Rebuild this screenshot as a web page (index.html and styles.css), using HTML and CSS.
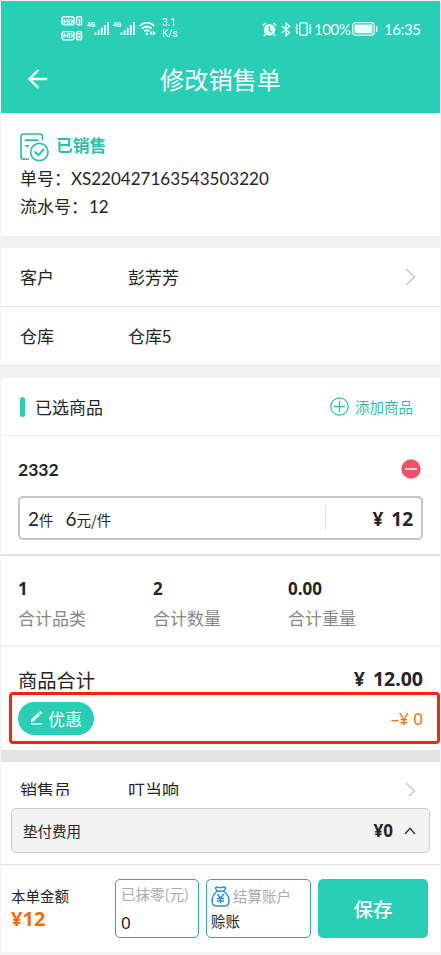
FILE: index.html
```html
<!DOCTYPE html>
<html lang="zh-CN">
<head>
<meta charset="utf-8">
<title>修改销售单</title>
<link rel="stylesheet" href="styles.css">
</head>
<body>
<div class="phone">
  <header class="header">
    <div class="status">
      <div class="status-left">
        <svg class="hd" width="22" height="25" viewBox="0 0 22 25">
          <g fill="none" stroke="#fff" stroke-width="1.4"><rect x="1" y=".7" width="12" height="8.2" rx="2"/><rect x="15.6" y=".7" width="5" height="8.2" rx="1.4"/><rect x="1" y="15.6" width="12" height="8.2" rx="2"/><rect x="15.6" y="15.6" width="5" height="8.2" rx="1.4"/></g>
          <g fill="#fff" font-family="Roboto" font-weight="700" font-size="7.4"><text x="1.9" y="7.5">HD</text><text x="16.1" y="7.5">1</text><text x="1.9" y="22.4">HD</text><text x="16" y="22.4">2</text></g>
        </svg>
        <svg class="sig" width="22" height="15" viewBox="0 0 22 15">
          <text x="0" y="6" fill="#fff" font-family="Roboto" font-weight="700" font-size="7" textLength="8" lengthAdjust="spacingAndGlyphs">4G</text>
          <path d="M8.5 14V11.6M11.6 14V9.2M14.7 14V6.8M17.8 14V4M20.9 14V1" stroke="#fff" stroke-width="1.8"/>
        </svg>
        <svg class="sig2" width="22" height="15" viewBox="0 0 22 15">
          <text x="0" y="6" fill="#fff" font-family="Roboto" font-weight="700" font-size="7" textLength="8" lengthAdjust="spacingAndGlyphs">4G</text>
          <path d="M8.5 14V11.6M11.6 14V9.2M14.7 14V6.8M17.8 14V4M20.9 14V1" stroke="#fff" stroke-width="1.8"/>
        </svg>
        <svg class="wifi" width="17" height="15" viewBox="0 0 17 15">
          <path d="M.8 4.8Q8 -1.6 15.2 4.8M3.1 7.7Q8 3.4 12.9 7.7M5.3 10.4Q8 8.1 10.7 10.4" fill="none" stroke="#fff" stroke-width="1.7"/>
          <circle cx="8" cy="12.9" r="1.3" fill="#fff"/><path d="M13.3 9.6v5l-2.5-2.3zM14.2 9.6v5l2.5-2.3z" fill="#fff"/>
        </svg>
        <div class="speed"><span>3.1</span><span>K/s</span></div>
      </div>
      <div class="status-right">
        <svg width="15" height="15" viewBox="0 0 15 15">
          <circle cx="7.5" cy="7.8" r="5.8" fill="#e9fffb"/><path d="M.8 3.6 3.4 1M14.2 3.6 11.6 1M3.5 12.2 1.8 14M11.5 12.2l1.7 1.8" stroke="#e9fffb" stroke-width="1.5"/><path d="M7.4 4.2v4l2.2 2.3" fill="none" stroke="#28cfb5" stroke-width="1.4"/>
        </svg>
        <svg class="bt" width="10" height="15" viewBox="0 0 10 15"><path d="M.8 4 8.6 10.6 5 13.8V1.2l3.6 3L.8 11" fill="none" stroke="#e9fffb" stroke-width="1.3"/></svg>
        <svg class="vib" width="17" height="14" viewBox="0 0 17 14"><rect x="4.8" y=".8" width="7.4" height="12.4" rx="1.2" fill="none" stroke="#e9fffb" stroke-width="1.4"/><path d="M1 2.2l1.7 1.6L1 5.4 2.7 7 1 8.6l1.7 1.6L1 11.8M16 2.2l-1.7 1.6L16 5.4 14.3 7 16 8.6l-1.7 1.6 1.7 1.6" fill="none" stroke="#e9fffb" stroke-width="1.1"/></svg>
        <span class="pct">100%</span>
        <svg class="bat" width="26" height="14" viewBox="0 0 26 14"><rect x=".7" y=".7" width="21.6" height="12.4" rx="3" fill="none" stroke="#e9fffb" stroke-width="1.2"/><rect x="2.5" y="2.6" width="18" height="8.6" rx="1" fill="#e9fffb"/><path d="M24.7 4v6" stroke="#e9fffb" stroke-width="1.4"/></svg>
        <span class="clock">16:35</span>
      </div>
    </div>
    <div class="nav">
      <svg class="back" width="20" height="20" viewBox="0 0 20 20"><path d="M19.2 10H1.6M10.4 1 1.4 10l9 9" fill="none" stroke="#fff" stroke-width="2.4"/></svg>
      <h1>修改销售单</h1>
    </div>
  </header>

  <section class="order">
    <div class="state">
      <svg width="29" height="29" viewBox="0 0 29 29" fill="none" stroke="#2bc2aa" stroke-width="1.7" stroke-linecap="round">
        <path d="M22.4 6.2V3.4Q22.4 1 20 1H3.4Q1 1 1 3.4v20.4q0 2.4 2.4 2.4h4.8M5.6 7.2h12.2M5.6 12.8h3"/><circle cx="19.3" cy="19" r="8.7"/><path d="m15 19 3.4 3.1 5.2-5.6" stroke-width="2"/>
      </svg>
      <span>已销售</span>
    </div>
    <p class="no">单号：<b>XS220427163543503220</b></p>
    <p class="serial">流水号：<b>12</b></p>
  </section>

  <div class="gap"></div>
  <div class="row customer"><span class="label">客户</span><span>彭芳芳</span>
    <svg class="chev" width="11" height="18" viewBox="0 0 11 18"><path d="m1 1 8.6 8L1 17" fill="none" stroke="#c4c4c4" stroke-width="1.3"/></svg></div>
  <div class="row store"><span class="label">仓库</span><span>仓库5</span></div>
  <div class="gap gap-b"></div>

  <div class="picked">
    <i class="bar"></i><span class="picked-title">已选商品</span>
    <svg width="19" height="19" viewBox="0 0 19 19"><path d="M9.5 4v11M4 9.5h11" stroke="#2fbfa9" stroke-width="1.3"/><circle cx="9.5" cy="9.5" r="8.7" fill="none" stroke="#2fbfa9" stroke-width="1.2"/></svg>
    <span class="add">添加商品</span>
  </div>

  <section class="product">
    <div class="product-head"><span>2332</span>
      <svg width="20" height="20" viewBox="0 0 20 20"><circle cx="10" cy="10" r="9.7" fill="#ee5264"/><path d="M4 10h12" stroke="#fff" stroke-width="1.4"/></svg></div>
    <div class="product-box">
      <span class="qty"><b>2</b>件</span><span class="price"><b>6</b>元/件</span>
      <span class="amount">¥ 12</span>
    </div>
  </section>

  <section class="summary">
    <div><b>1</b><span>合计品类</span></div>
    <div><b>2</b><span>合计数量</span></div>
    <div><b>0.00</b><span>合计重量</span></div>
  </section>

  <section class="total">
    <div class="total-row"><span>商品合计</span><b>¥ 12.00</b></div>
    <div class="discount">
      <span class="pill"><svg width="13" height="14" viewBox="0 0 13 14"><path d="M1 12.8h11" stroke="#fff" stroke-width="1.5"/><path d="m.8 11.2.8-3.1 6.3-6 2.1 2-6.3 6.1zM8.7 1.4 9.8.4q.5-.4 1 .1l1.1 1q.5.5 0 1l-1.1 1z" fill="#fff"/></svg>优惠</span>
      <span class="minus">–¥ 0</span>
    </div>
  </section>

  <div class="gap gap-dark"></div>
  <div class="row seller"><span class="label">销售员</span><span>叮当响</span>
    <svg class="chev" width="11" height="18" viewBox="0 0 11 18"><path d="m1 1 8.6 8L1 17" fill="none" stroke="#c4c4c4" stroke-width="1.3"/></svg></div>

  <div class="fee"><span>垫付费用</span><b>¥0</b>
    <svg width="12" height="8" viewBox="0 0 12 8"><path d="M1 7 6 1.4 11 7" fill="none" stroke="#333" stroke-width="1.4"/></svg></div>

  <footer class="footer">
    <div class="sum"><span>本单金额</span><b>¥12</b></div>
    <div class="field round"><span>已抹零(元)</span><b>0</b></div>
    <div class="field account">
      <div class="acc-top"><svg width="19" height="21" viewBox="0 0 19 21" fill="none" stroke="#258fd2" stroke-width="1.4" stroke-linejoin="round"><path d="M6.1 5.2 4.3 2Q6 .5 7.8 1.4q1.6.8 3.2 0Q13 .5 14.7 2l-1.8 3.2M6.1 5.2h6.8M6.1 5.2Q1 9.4 1 14.5 1 20 5.4 20h8.2Q18 20 18 14.5q0-5.1-5.1-9.3"/><path d="m6.3 8 3.2 4 3.2-4M9.5 12v5.5M6 12.4h7M6 15h7"/></svg><span>结算账户</span></div>
      <em>赊账</em>
    </div>
    <div class="save">保存</div>
  </footer>
</div>
</body>
</html>
```
FILE: styles.css
```css
* { box-sizing: border-box; }
body {
  margin: 0;
  padding: 1px 1px 0;
  height: 955px;
  overflow: hidden;
  background: #f3f3f3;
  color: #252525;
  font-family: "Noto Sans CJK SC", sans-serif;
  font-size: 17px;
}
p, h1 { margin: 0; font-weight: 400; }
svg { display: block; flex: none; }
.phone { width: 439px; height: 951px; background: #fff; overflow: hidden; }

.header { height: 112px; background: #28cfb5; color: #fff; }
.status { display: flex; justify-content: space-between; height: 54px; padding: 0 20px 0 60px; }
.status-left, .status-right { display: flex; align-items: center; }
.sig { margin-left: 4px; }
.sig2 { margin-left: 4px; }
.wifi { margin-left: 4px; }
.speed { display: flex; flex-direction: column; margin-left: 6px; font: 10px/11px Roboto, sans-serif; }
.status-right { color: #e9fffb; font-family: Lato, sans-serif; font-size: 15px; padding-top: 2px; }
.status-right svg:first-child { margin-left: -1px; }
.bt { margin-left: 4px; }
.vib { margin-left: 4px; }
.pct { width: 36px; margin-left: 2px; white-space: nowrap; letter-spacing: -.4px; }
.bat { margin-left: 2px; }
.clock { width: 36px; margin-left: 6px; letter-spacing: -.4px; }
.nav { display: flex; align-items: center; height: 48px; padding-left: 27px; }
.nav h1 { margin-left: 112px; font-size: 24.2px; line-height: 48px; }

.order { height: 123px; padding: 20px 19px 0; }
.state { display: flex; align-items: center; height: 29px; gap: 7px; color: #2bc2aa; font-size: 16.8px; font-weight: 700; }
.state span { line-height: 24px; padding-bottom: 5px; }
.order p { height: 28px; line-height: 28px; white-space: nowrap; }
.order .no { margin-top: 2px; }
.order b { font-family: Lato, sans-serif; font-weight: 400; }
.serial b { margin-left: 1px; }

.gap { height: 12px; background: #f1f1f1; }
.gap-b { height: 13px; border-top: 1px solid #e4e4e4; }
.gap-dark { background: #e4e4e4; }
.row { display: grid; grid-template-columns: 108px 1fr 11px; align-items: center; height: 59px; padding: 0 24px 0 19px; line-height: 30px; }
.customer { border-bottom: 1px solid #e2e2e2; }
.store { height: 58px; }

.picked { display: flex; align-items: center; height: 58px; padding: 0 27px 0 19px; border-bottom: 1px solid #ececec; }
.bar { width: 5px; height: 20px; border-radius: 3px; background: #28cfb5; }
.picked-title { flex: 1; margin-left: 10px; }
.add { margin-left: 6px; font-size: 14.5px; color: #2fbfa9; }

.product { height: 120px; padding: 22px 17px 0; border-bottom: 2px solid #dedede; }
.product-head { display: flex; justify-content: space-between; align-items: center; height: 22px; padding-right: 2px; font: 700 17.5px Lato, sans-serif; }
.product-box { display: flex; align-items: center; height: 44px; margin-top: 16px; padding: 0 8px; border: 2px solid #c4c4c4; border-radius: 5px; font-size: 14.5px; }
.product-box b { font-family: Lato, sans-serif; font-weight: 400; font-size: 19px; }
.price { margin-left: 12px; }
.product-box .amount { margin-left: auto; width: 88px; height: 24px; border-left: 1px solid #e4e4e4; text-align: right; font: 700 19px/26px "Noto Sans", sans-serif; word-spacing: 3px; }

.summary { display: grid; grid-template-columns: 135px 135px 1fr; height: 91px; padding: 21px 17px 0; border-bottom: 2px solid #f1f1f1; }
.summary div { display: flex; flex-direction: column; }
.summary b { font: 700 17px/24px "Noto Sans", sans-serif; }
.summary span { margin-top: 2px; line-height: 30px; color: #888; }

.total { height: 103px; padding: 19px 17px 0; }
.total-row { display: flex; justify-content: space-between; align-items: center; height: 28px; font-size: 19.3px; }
.total-row b { font: 700 19.5px/26px "Noto Sans", sans-serif; word-spacing: 3px; padding-bottom: 2px; }
.discount { display: flex; justify-content: space-between; align-items: center; height: 52px; margin: -2px -17px 0 -9px; padding: 0 14px 0 6px; border: 3px solid #fe2216; border-radius: 4px; }
.pill { display: flex; align-items: center; gap: 5px; width: 76px; height: 33px; padding-left: 12px; border-radius: 17px; background: #28cfb5; color: #fff; font-size: 17px; line-height: 33px; }
.minus { color: #e77320; font: 17px "Noto Sans", sans-serif; }

.seller { height: 34px; padding-top: 13px; overflow: hidden; align-items: start; }
.seller .chev { margin-top: 7px; }

.fee { display: flex; align-items: center; height: 45px; margin: 12px 10px 11px; padding: 0 13px 0 11px; border: 1px solid #cacaca; border-radius: 5px; background: #f2f2f2; font-size: 14.5px; }
.fee b { margin-left: auto; margin-right: 11px; font: 700 17px "Noto Sans", sans-serif; }

.footer { display: flex; height: 88px; padding: 14px 12px 0 10px; border-top: 1px solid #e4e4e4; }
.sum { display: flex; flex-direction: column; width: 104px; padding-top: 5px; font-size: 14.5px; line-height: 24px; }
.sum b { color: #fa6b0c; font: 700 20px/22px "Noto Sans", sans-serif; }
.field { display: flex; flex-direction: column; height: 59px; border: 1.5px solid #4198cf; border-radius: 5px; padding-left: 5px; line-height: 28px; white-space: nowrap; }
.field span { color: #aaa; font-size: 14.5px; }
.round { width: 84px; }
.round b { font: 17px/30px "Noto Sans", sans-serif; }
.account { width: 105px; margin-left: 7px; padding-left: 4px; }
.acc-top { display: flex; align-items: center; gap: 3px; height: 31px; padding-top: 1px; }
.account em { font-style: normal; font-size: 14.5px; line-height: 20px; }
.save { flex: 1; height: 59px; margin-left: 7px; border-radius: 5px; background: #28cfb5; color: #fff; text-align: center; font-size: 19.5px; font-weight: 500; line-height: 59px; }
```
